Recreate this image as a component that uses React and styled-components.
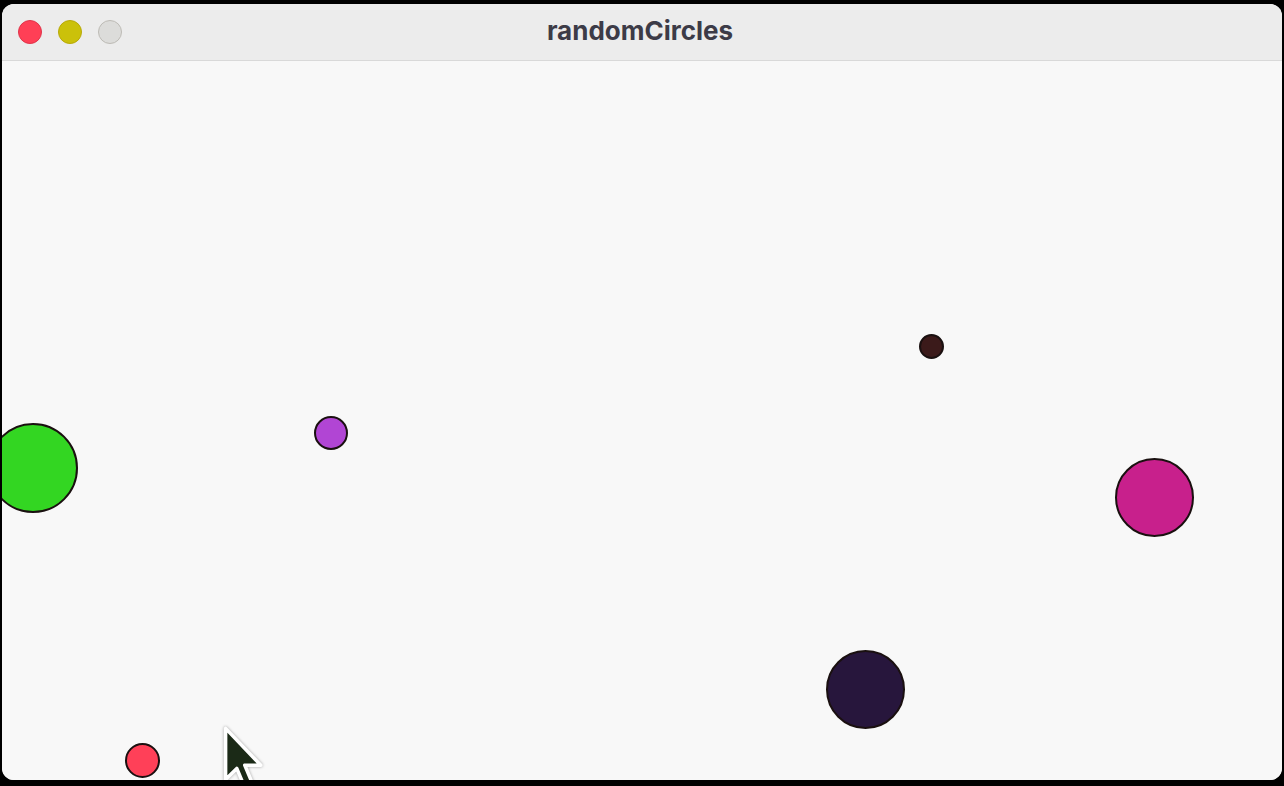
import React from 'react'
import styled, { createGlobalStyle } from 'styled-components'

const COLORS = {
  DESKTOP: '#000',
  TITLE_BAR: '#ececec',
  TITLE_BORDER: '#d9d9d9',
  TITLE_TEXT: '#3c3b47',
  CANVAS: '#f8f8f8',
  OUTLINE: '#1a1010'
}

const GlobalStyle = createGlobalStyle`
  html, body {
    margin: 0;
    padding: 0;
    background: ${COLORS.DESKTOP};
    overflow: hidden;
  }
  #root {
    height: 786px;
  }
`

const Desktop = styled.div`
  box-sizing: border-box;
  display: flex;
  height: 786px;
  padding: 4px 2px 6px 2px;
  width: 1284px;
`

const Window = styled.div`
  background: ${COLORS.CANVAS};
  border-radius: 12px;
  display: flex;
  flex: 1;
  flex-direction: column;
  overflow: hidden;
`

const TitleBar = styled.header`
  align-items: center;
  background: ${COLORS.TITLE_BAR};
  border-bottom: 1px solid ${COLORS.TITLE_BORDER};
  display: flex;
  flex-shrink: 0;
  height: 56px;
`

const Lights = styled.div`
  display: flex;
  gap: 16px;
  padding-left: 16px;
`

const Light = styled.span`
  background: ${p => p.$fill};
  border: 1px solid ${p => p.$ring};
  border-radius: 50%;
  box-sizing: border-box;
  height: 24px;
  width: 24px;
`

const Title = styled.h1`
  color: ${COLORS.TITLE_TEXT};
  flex: 1;
  font-family: "Inter", "Liberation Sans", Arial, sans-serif;
  font-size: 26px;
  font-weight: 700;
  line-height: 30px;
  margin: -2px 124px 0 0;
  text-align: center;
`

const Canvas = styled.main`
  background: ${COLORS.CANVAS};
  flex: 1;
  position: relative;
`

const Dot = styled.span`
  background: ${p => p.$fill};
  border: 2px solid ${COLORS.OUTLINE};
  border-radius: 50%;
  box-sizing: border-box;
  position: absolute;
`

const Pointer = styled.svg`
  filter: drop-shadow(0 0 1.5px rgba(0, 0, 0, 0.35));
  left: 214px;
  position: absolute;
  top: 664px;
`

const CIRCLES = [
  { x: 31, y: 407, r: 45, fill: '#33d622' },
  { x: 329, y: 372, r: 17, fill: '#b145d4' },
  { x: 929, y: 285, r: 12.5, fill: '#3b1a1a' },
  { x: 1152, y: 436, r: 39.5, fill: '#c8208c' },
  { x: 863, y: 628, r: 39.5, fill: '#27163c' },
  { x: 140, y: 699, r: 17.5, fill: '#ff4058' }
]

const Cursor = () => (
  <Pointer width="64" height="74" viewBox="0 0 40 46">
    <path
      d="M6 2 L6 34 L13 27 L18 39 L23 37 L18 25 L28 25 Z"
      fill="#1b2a17"
      stroke="#ffffff"
      strokeWidth="2.2"
      strokeLinejoin="round"
    />
  </Pointer>
)

export default function App () {
  return (
    <>
      <GlobalStyle />
      <Desktop>
        <Window>
          <TitleBar>
            <Lights>
              <Light $fill="#ff3f56" $ring="#e0344a" />
              <Light $fill="#cbc10a" $ring="#b8a908" />
              <Light $fill="#dcdcda" $ring="#bdbbb5" />
            </Lights>
            <Title>randomCircles</Title>
          </TitleBar>
          <Canvas>
            {CIRCLES.map((c, i) => (
              <Dot
                key={i}
                $fill={c.fill}
                style={{ left: c.x - c.r, top: c.y - c.r, width: c.r * 2, height: c.r * 2 }}
              />
            ))}
            <Cursor />
          </Canvas>
        </Window>
      </Desktop>
    </>
  )
}
